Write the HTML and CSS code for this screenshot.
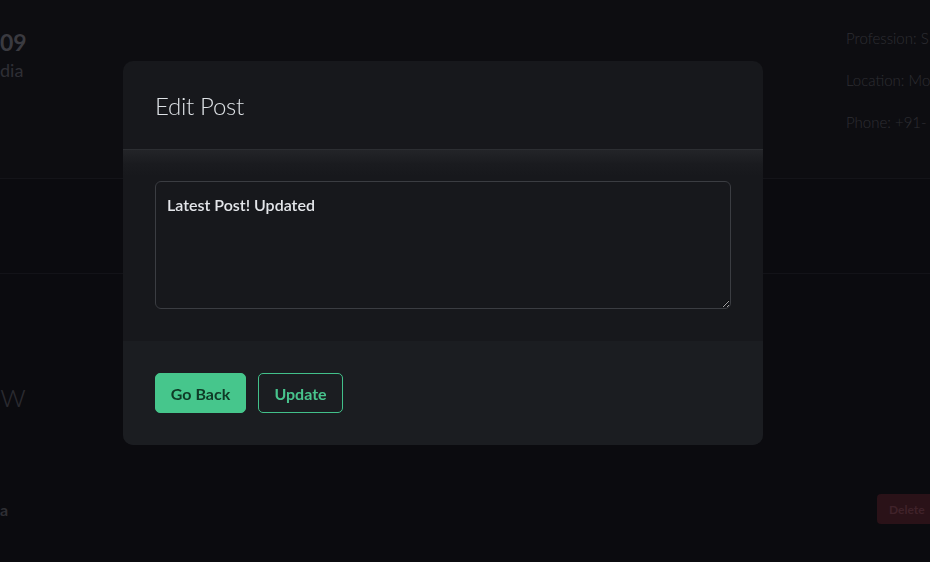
FILE: index.html
```html
<!DOCTYPE html>
<html lang="en">
<head>
<meta charset="utf-8">
<title>Edit Post</title>
<link rel="stylesheet" href="styles.css">
</head>
<body>
<div class="page">
  <section class="profile">
    <div class="profile-main">
      <div class="profile-num">09</div>
      <div class="profile-sub">dia</div>
    </div>
    <ul class="profile-info">
      <li>Profession: S</li>
      <li>Location: Mo</li>
      <li>Phone: +91-</li>
    </ul>
  </section>
  <section class="spacer-row"></section>
  <h2 class="section-title">w</h2>
  <div class="post-row">
    <span class="post-author">a</span>
    <button class="btn-delete">Delete</button>
  </div>
</div>

<div class="backdrop">
  <div class="modal">
    <div class="modal-header">
      <h1 class="modal-title">Edit Post</h1>
    </div>
    <div class="modal-body">
      <textarea class="post-input">Latest Post! Updated</textarea>
    </div>
    <div class="modal-footer">
      <button class="btn btn-fill">Go Back</button>
      <button class="btn btn-outline">Update</button>
    </div>
  </div>
</div>
</body>
</html>
```
FILE: styles.css
```css
* { box-sizing: border-box; }
html, body { margin: 0; padding: 0; }
body {
  width: 930px;
  height: 562px;
  overflow: hidden;
  background: #0b0b0f;
  font-family: Lato, "Open Sans", sans-serif;
  color: #dee2e6;
}
.page { width: 930px; }
.profile {
  height: 179px;
  background: #0d0d11;
  border-bottom: 1px solid #141419;
  display: flex;
  justify-content: space-between;
  padding-top: 28px;
}
.profile-main { color: #3a3a40; }
.profile-num { font-size: 23px; font-weight: 700; line-height: 28px; }
.profile-sub { font-size: 18px; line-height: 28px; color: #2f2f35; }
.profile-info {
  list-style: none;
  margin: 0;
  padding: 0;
  width: 84px;
  white-space: nowrap;
  font-size: 15px;
  font-weight: 300;
  color: #2e2e33;
  display: flex;
  flex-direction: column;
  gap: 23px;
  padding-top: 1px;
}
.profile-info li { line-height: 19px; }
.spacer-row {
  height: 95px;
  border-bottom: 1px solid #131318;
}
.section-title {
  margin: 0;
  padding-top: 100px;
  font-size: 34px;
  font-weight: 300;
  line-height: 40px;
  color: #2a2a30;
}
.post-row {
  margin-top: 80px;
  display: flex;
  justify-content: space-between;
  align-items: center;
  height: 30px;
}
.post-author { font-size: 16px; font-weight: 700; color: #2f2f34; }
.btn-delete {
  width: 53px;
  height: 30px;
  white-space: nowrap;
  border: none;
  border-radius: 4px 0 0 4px;
  background: #2a1218;
  color: #40222a;
  font-family: inherit;
  font-size: 12px;
  font-weight: 700;
  text-align: left;
  padding: 0 0 0 12px;
}

.backdrop {
  position: fixed;
  inset: 0;
  display: flex;
  justify-content: flex-start;
  align-items: flex-start;
  padding: 61px 0 0 123px;
}
.modal {
  width: 640px;
  background: #17181c;
  border-radius: 10px;
  overflow: hidden;
}
.modal-header {
  height: 89px;
  padding: 0 32px;
  display: flex;
  align-items: center;
  border-bottom: 1px solid #2c2e32;
}
.modal-title {
  margin: 0;
  font-size: 24px;
  font-weight: 300;
  color: #dee2e6;
  letter-spacing: -0.3px;
}
.modal-body {
  padding: 31px 32px 32px;
  background: linear-gradient(#232428 0px, #1a1b1f 14px, #17181c 26px);
}
.post-input {
  display: block;
  width: 576px;
  height: 128px;
  margin: 0;
  background: #17181c;
  border: 1px solid #3b3d42;
  border-radius: 6px;
  padding: 12px 11px;
  font-family: inherit;
  font-size: 16px;
  font-weight: 600;
  line-height: 22px;
  color: #e4e6ea;
  resize: vertical;
}
.modal-footer {
  height: 104px;
  background: #1b1d21;
  padding: 0 32px;
  display: flex;
  align-items: center;
  gap: 12px;
}
.btn {
  height: 40px;
  border-radius: 5px;
  font-family: inherit;
  font-size: 16px;
  font-weight: 700;
  padding: 0;
  white-space: nowrap;
}
.btn-fill {
  width: 91px;
  background: #46c68c;
  border: 1px solid #46c68c;
  color: #0f3a26;
}
.btn-outline {
  width: 85px;
  background: transparent;
  border: 1px solid #42c08a;
  color: #48c48d;
}
```
